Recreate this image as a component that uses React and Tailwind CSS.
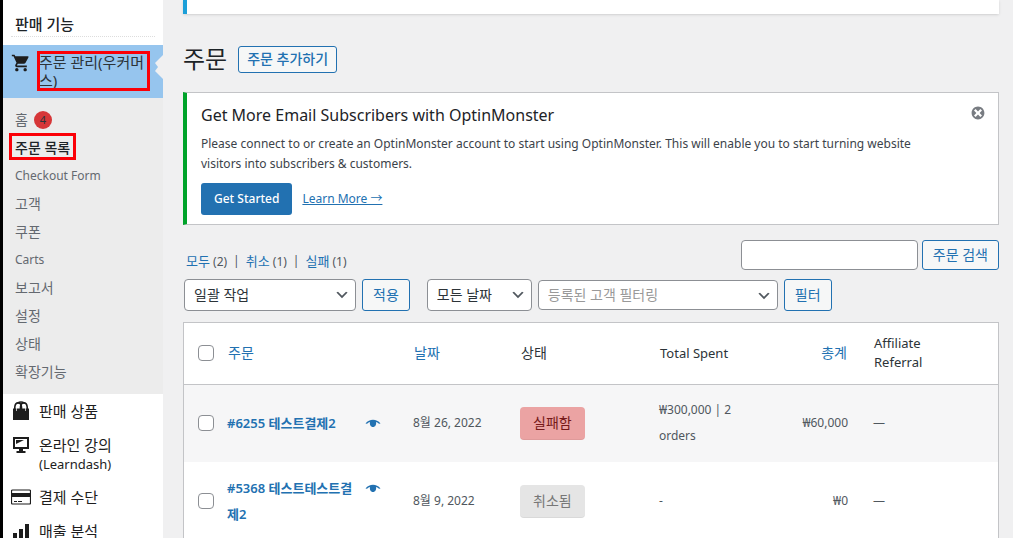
import { MdShoppingCart } from "react-icons/md";

const SUBMENU = ["Checkout Form", "고객", "쿠폰", "Carts", "보고서", "설정", "상태", "확장기능"];

const BagIcon = () => (
  <svg className="h-5 w-5 shrink-0" viewBox="0 0 20 20" fill="none">
    <path d="M2 7.500h16V19H2z" fill="#1d1d1d" />
    <path d="M3.800 8V6C4.300 0.500 10 0.500 10.500 6V8M9.500 8V6C10 0.500 15.700 0.500 16.200 6V8" stroke="#1d1d1d" strokeWidth="1.600" />
    <path d="M6.500 2.200C8.500 0.800 11.500 0.800 13.500 2.200" stroke="#1d1d1d" strokeWidth="1.600" />
    <path d="M5.500 7v3M14.500 7v3" stroke="#ffffff" strokeWidth="0.700" />
  </svg>
);

const MonitorIcon = () => (
  <svg className="h-5 w-5 shrink-0" viewBox="0 0 20 20" fill="#1d1d1d">
    <path fillRule="evenodd" d="M2 2h16v12H2zM4 4v8h12V4z" />
    <path d="M5 9V5h8zM8 14h4v2h2.500v2h-9v-2H8z" />
  </svg>
);

const CardIcon = () => (
  <svg className="h-5 w-5 shrink-0" viewBox="0 0 20 20">
    <rect x="0.500" y="3" width="19" height="14" rx="1" fill="#fff" stroke="#1d1d1d" strokeWidth="1.200" />
    <path d="M1 6h18v4H1z" fill="#1d1d1d" />
    <path d="M3 14.500h3M7 14.500h4" stroke="#1d1d1d" />
  </svg>
);

const BarsIcon = () => (
  <svg className="h-5 w-5 shrink-0" viewBox="0 0 20 20" fill="#1d1d1d">
    <path d="M2 12h4v6H2zM8 8h4v10H8zM14 3h4v15h-4z" />
  </svg>
);

const EyeIcon = () => (
  <svg className="h-4 w-4" viewBox="0 0 16 16" fill="#2271b1">
    <path d="M0.500 8.500C4.500 3.500 11.500 3.500 15.500 8.500L14 8.800C12.800 7.800 11.800 7.200 11 7c0.600 2.800-0.800 5-3 5s-3.600-2.200-3-5C4.200 7.200 3.200 7.800 2 8.800z" />
  </svg>
);

const Chevron = () => (
  <svg className="pointer-events-none absolute top-2 right-1.5 h-4 w-4" viewBox="0 0 20 20" fill="#50575e">
    <path d="M5 6l5 5 5-5 2 1-7 7-7-7 2-1z" />
  </svg>
);

const MENU = [
  { label: "판매 상품", Icon: BagIcon },
  { label: "온라인 강의", extra: "(Learndash)", Icon: MonitorIcon },
  { label: "결제 수단", Icon: CardIcon },
  { label: "매출 분석", Icon: BarsIcon },
];

const ORDERS = [
  {
    id: "#6255 테스트결제2", date: "8월 26, 2022", status: "실패함", spent: "₩300,000 | 2 orders", total: "₩60,000",
    row: "bg-[#f6f6f7]", badge: "bg-[#eba3a3] text-[#761919]",
  },
  {
    id: "#5368 테스트테스트결제2", date: "8월 9, 2022", status: "취소됨", spent: "-", total: "₩0",
    row: "bg-white", badge: "bg-[#e5e5e5] text-[#777777]",
  },
];

const BUTTON = "shrink-0 rounded-[3px] border border-[#2271b1] bg-[#f6f7f7] text-sm text-[#2271b1] whitespace-nowrap";

function Select({ label, option, className, muted }) {
  return (
    <div className={`relative shrink-0 ${className}`}>
      <select
        aria-label={label}
        className={`h-full w-full appearance-none rounded border border-[#8c8f94] bg-white pr-6 pl-[9px] text-sm ${muted ? "text-[#999999]" : "text-[#2c3338]"}`}
      >
        <option>{option}</option>
      </select>
      <Chevron />
    </div>
  );
}

function Sidebar() {
  return (
    <nav className="w-[163px] shrink-0 border-l-3 border-black bg-white">
      <h2 className="mx-2 mt-4 mb-2 border-b border-dotted border-[#dddddd] pb-1 pl-1 text-[15px] leading-4 font-medium text-[#1d2327]">판매 기능</h2>
      <a href="#orders" className="relative flex h-[53px] gap-2 bg-[#96c5ee] pt-2 pl-2 text-[15px] leading-[18px] text-[#2c3338]">
        <MdShoppingCart className="h-5 w-5 shrink-0 text-[#1d1d1d]" />
        <span className="w-[112px] break-all">주문 관리(우커머스)</span>
        <span className="absolute top-1.5 left-[34px] h-10 w-[113px] border-3 border-[#fb0007]" />
        <svg className="absolute top-2.5 right-0 h-6 w-2" viewBox="0 0 8 24" fill="#f0f0f1">
          <path d="M8 0v24L0 16l3-4-3-4z" />
        </svg>
      </a>
      <div className="bg-[#ececec] pt-2 pb-2 pl-3 text-sm text-[#646970]">
        <a href="#home" className="flex h-7 items-center gap-1.5">
          홈
          <span className="flex h-[18px] w-[18px] items-center justify-center rounded-full bg-[#d63638] text-[11px] text-[#2c3338]">4</span>
        </a>
        <a href="#list" className="relative flex h-7 items-center font-medium text-[#1d2327]">
          주문 목록
          <span className="absolute -top-px -left-1.5 h-[27px] w-[67px] border-3 border-[#fb0007]" />
        </a>
        {SUBMENU.map((item) => (
          <a key={item} href="#sub" className="flex h-7 items-center">
            <span className={/[A-Z]/.test(item) ? "text-xs" : "text-sm"}>{item}</span>
          </a>
        ))}
      </div>
      <div>
        {MENU.map(({ label, extra, Icon }) => (
          <a key={label} href="#menu" className="flex gap-2 py-[7px] pl-2 text-[#1d1d1d]">
            <Icon />
            <span className="text-[15px] leading-5">
              {label}
              {extra && <span className="block text-[13px] leading-[18px]">{extra}</span>}
            </span>
          </a>
        ))}
      </div>
    </nav>
  );
}

export default function App() {
  return (
    <div className="flex h-screen overflow-hidden bg-[#f0f0f1] font-['Noto_Sans','Noto_Sans_CJK_KR',sans-serif] text-xs text-[#3c434a]">
      <Sidebar />
      <main className="min-w-0 flex-1 pr-3.5 pl-5">
        <div className="h-3.5 border-l-4 border-[#1c9fd8] bg-white shadow-sm" />
        <div className="mt-[31px] flex items-center gap-[11px]">
          <h1 className="text-2xl leading-7 text-[#1d2327]">주문</h1>
          <button className={`h-[27px] px-2 font-medium ${BUTTON}`}>주문 추가하기</button>
        </div>

        <section className="mt-[19px] flex items-start justify-between border border-l-4 border-[#c3c4c7] border-l-[#00a32a] bg-white pt-3 pr-3 pb-[9px] pl-3.5">
          <div>
            <h3 className="text-base leading-5 text-[#1d2327]">Get More Email Subscribers with OptinMonster</h3>
            <p className="mt-[9px] max-w-[740px] leading-5">
              Please connect to or create an OptinMonster account to start using OptinMonster. This will enable you to start turning website visitors into subscribers &amp; customers.
            </p>
            <div className="mt-[9px] flex items-center gap-2.5">
              <button className="h-8 rounded-[3px] bg-[#2271b1] px-[13px] font-medium text-white">Get Started</button>
              <a href="#learn" className="text-[#2271b1] underline">Learn More →</a>
            </div>
          </div>
          <button aria-label="닫기">
            <svg className="h-4 w-4" viewBox="0 0 20 20" fill="#787c82">
              <path d="M10 2c4.420 0 8 3.580 8 8s-3.580 8-8 8-8-3.580-8-8 3.580-8 8-8zm5 11l-3-3 3-3-2-2-3 3-3-3-2 2 3 3-3 3 2 2 3-3 3 3z" />
            </svg>
          </button>
        </section>

        <div className="mt-[15px] flex h-[30px] items-center justify-between">
          <div className="flex gap-1.5 pt-3.5 pl-[3px] text-[#50575e]">
            <a href="#all"><span className="text-[13px] text-[#2271b1]">모두</span> (2)</a>|
            <a href="#cancelled"><span className="text-[13px] text-[#2271b1]">취소</span> (1)</a>|
            <a href="#failed"><span className="text-[13px] text-[#2271b1]">실패</span> (1)</a>
          </div>
          <div className="flex gap-1">
            <input aria-label="주문 검색" className="h-[30px] w-[177px] rounded border border-[#8c8f94] bg-white px-2 text-sm" />
            <button className={`h-[30px] px-2.5 ${BUTTON}`}>주문 검색</button>
          </div>
        </div>

        <div className="mt-[9px] flex items-center gap-1.5 pl-px">
          <Select label="일괄 작업 선택" option="일괄 작업" className="h-8 w-[172px]" />
          <button className={`mr-[11px] h-8 px-2.5 ${BUTTON}`}>적용</button>
          <Select label="날짜로 필터" option="모든 날짜" className="h-8 w-[105px]" />
          <Select label="고객으로 필터" option="등록된 고객 필터링" className="h-[30px] w-[240px]" muted />
          <button className={`h-8 px-2.5 ${BUTTON}`}>필터</button>
        </div>

        <div className="mt-[11px] border border-[#c3c4c7]">
          <table className="w-full table-fixed border-collapse bg-white text-left">
            <thead className="border-b border-[#c3c4c7] text-[#2c3338]">
              <tr className="h-[61px] text-sm *:font-normal">
                <th className="w-[34px] pl-3.5 align-middle">
                  <input type="checkbox" aria-label="모두 선택" className="block h-4 w-4 appearance-none rounded border border-[#8c8f94] bg-white" />
                </th>
                <th className="pl-2.5"><a href="#order" className="text-[#2271b1]">주문</a></th>
                <th className="w-[107px] pl-2.5"><a href="#date" className="text-[#2271b1]">날짜</a></th>
                <th className="w-[139px] pl-2.5">상태</th>
                <th className="w-[120px] pl-2.5 text-[13px]">Total Spent</th>
                <th className="w-[94px] pr-[17px] text-right"><a href="#total" className="text-[#2271b1]">총계</a></th>
                <th className="w-[134px] pr-16 pl-2.5 text-[13px] leading-[19px]">Affiliate Referral</th>
              </tr>
            </thead>
            <tbody>
              {ORDERS.map((o) => (
                <tr key={o.id} className={`h-[78px] leading-[26px] text-[#50575e] ${o.row}`}>
                  <td className="pl-3.5">
                    <input type="checkbox" aria-label={o.id} className="block h-4 w-4 appearance-none rounded border border-[#8c8f94] bg-white" />
                  </td>
                  <td className="pr-[23px] pl-[9px]">
                    <div className="flex items-start justify-between">
                      <a href="#detail" className="w-[134px] text-[13px] font-semibold break-all text-[#2271b1]">{o.id}</a>
                      <button aria-label="미리보기" className="mt-[5px]"><EyeIcon /></button>
                    </div>
                  </td>
                  <td className="pl-[9px]">{o.date}</td>
                  <td className="pl-[9px]">
                    <span className={`inline-flex h-[33px] items-center rounded border-b border-black/5 px-[13px] text-sm ${o.badge}`}>{o.status}</span>
                  </td>
                  <td className="pr-8 pl-[9px]">{o.spent}</td>
                  <td className="pr-4 text-right">{o.total}</td>
                  <td className="pl-[9px]">—</td>
                </tr>
              ))}
            </tbody>
          </table>
        </div>
      </main>
    </div>
  );
}
